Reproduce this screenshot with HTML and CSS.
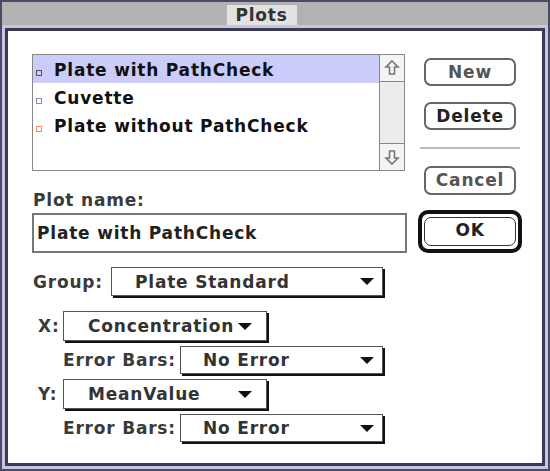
FILE: index.html
```html
<!DOCTYPE html>
<html lang="en">
<head>
    <meta charset="UTF-8">
    <title>Plots</title>
    <link rel="stylesheet" href="styles.css">
</head>
<body>
    <div class="window">
        <div class="titlebar">
            <div class="title">Plots</div>
        </div>

        <div class="frame">
            <div class="top">
                <div class="left">
                    <div class="listbox">
                        <ul class="items">
                            <li class="selected"><span class="mark mark-gray"></span>Plate with PathCheck</li>
                            <li><span class="mark mark-blue"></span>Cuvette</li>
                            <li><span class="mark mark-orange"></span>Plate without PathCheck</li>
                        </ul>
                        <div class="scrollbar">
                            <div class="arrow">
                                <svg width="16" height="18" viewBox="0 0 16 18">
                                    <polygon points="8,2 14,8 10.5,8 10.5,15 5.5,15 5.5,8 2,8" fill="#f4f4f4" stroke="#777" stroke-width="1.6"/>
                                </svg>
                            </div>
                            <div class="track"></div>
                            <div class="arrow arrow-down">
                                <svg width="16" height="18" viewBox="0 0 16 18">
                                    <polygon points="8,16 14,10 10.5,10 10.5,3 5.5,3 5.5,10 2,10" fill="#f4f4f4" stroke="#777" stroke-width="1.6"/>
                                </svg>
                            </div>
                        </div>
                    </div>

                    <div class="label name-label">Plot name:</div>
                    <div class="field">Plate with PathCheck</div>
                </div>

                <div class="right">
                    <div class="btn btn-new">New</div>
                    <div class="btn btn-delete">Delete</div>
                    <div class="sep"></div>
                    <div class="btn btn-cancel">Cancel</div>
                    <div class="ok-ring">
                        <div class="btn btn-ok">OK</div>
                    </div>
                </div>
            </div>

            <div class="row row-group">
                <span class="label group-label">Group:</span>
                <div class="popup popup-group"><span>Plate Standard</span><i class="tri"></i></div>
            </div>

            <div class="row row-axis">
                <span class="label axis-label">X:</span>
                <div class="popup popup-axis"><span>Concentration</span><i class="tri"></i></div>
            </div>
            <div class="row row-err">
                <span class="label err-label">Error Bars:</span>
                <div class="popup popup-err"><span>No Error</span><i class="tri"></i></div>
            </div>

            <div class="row row-axis">
                <span class="label axis-label">Y:</span>
                <div class="popup popup-axis"><span>MeanValue</span><i class="tri"></i></div>
            </div>
            <div class="row row-err">
                <span class="label err-label">Error Bars:</span>
                <div class="popup popup-err"><span>No Error</span><i class="tri"></i></div>
            </div>
        </div>
    </div>
</body>
</html>
```

FILE: styles.css
```css
body {
    margin: 0;
    padding: 0;
    background-color: #4a4a66;
    font-family: 'DejaVu Sans', sans-serif;
    font-weight: bold;
    font-size: 17px;
    letter-spacing: 0.8px;
    color: #222;
}

.window {
    width: 550px;
    height: 471px;
    box-sizing: border-box;
    border: 2px solid #4a4a66;
    background-color: #c6c6e0;
    display: flex;
    flex-direction: column;
}

.titlebar {
    height: 23px;
    background-color: #b2b2b2;
    display: flex;
    justify-content: center;
    align-items: flex-end;
}

.title {
    height: 20px;
    line-height: 20px;
    padding: 0 9px 0 8px;
    margin-right: 26px;
    background-color: #e2e2e2;
    color: #333;
}

.frame {
    flex: 1;
    margin: 3px;
    border: 3px solid #3a3a56;
    background-color: #fff;
    padding: 23px 0 0 24px;
}

.top {
    display: flex;
    gap: 11px;
}

.left {
    width: 375px;
}

/* list */
.listbox {
    width: 373px;
    height: 117px;
    box-sizing: border-box;
    border: 1px solid #888;
    display: flex;
}

.items {
    list-style: none;
    margin: 0;
    padding: 0;
    flex: 1;
}

.items li {
    height: 28px;
    line-height: 30px;
    padding-left: 3px;
    color: #111;
    white-space: nowrap;
}

.items li.selected {
    background-color: #ccccfa;
}

.mark {
    display: inline-block;
    width: 4px;
    height: 4px;
    border: 1.5px solid #555;
    margin-right: 12px;
    vertical-align: 0;
}

.mark-blue {
    border-color: #8c8cb8;
}

.mark-orange {
    border-color: #ff8a48;
}

.scrollbar {
    width: 24px;
    border-left: 1px solid #888;
    background-color: #ececec;
    display: flex;
    flex-direction: column;
}

.arrow {
    height: 26px;
    border-bottom: 1px solid #888;
    background-color: #f4f4f4;
    display: flex;
    align-items: center;
    justify-content: center;
}

.arrow-down {
    border-bottom: none;
    border-top: 1px solid #888;
}

.track {
    flex: 1;
}

.label {
    color: #3a3a3a;
}

.name-label {
    height: 20px;
    line-height: 20px;
    margin-top: 19px;
    padding-left: 1px;
}

.field {
    margin-top: 3px;
    height: 40px;
    box-sizing: border-box;
    border: 2px solid #777;
    line-height: 36px;
    padding-left: 3px;
    color: #222;
}

/* buttons */
.right {
    width: 104px;
    display: flex;
    flex-direction: column;
    align-items: center;
}

.btn {
    width: 92px;
    height: 28px;
    box-sizing: border-box;
    border: 2px solid #666;
    border-radius: 7px;
    text-align: center;
    line-height: 24px;
    color: #222;
}

.btn-new {
    margin-top: 4px;
    color: #555;
}

.btn-delete {
    margin-top: 16px;
}

.sep {
    width: 100px;
    height: 2px;
    background-color: #bbb;
    margin-top: 17px;
}

.btn-cancel {
    margin-top: 17px;
    height: 29px;
    color: #555;
}

.ok-ring {
    margin-top: 15px;
    width: 104px;
    height: 43px;
    box-sizing: border-box;
    border: 4px solid #111;
    border-radius: 10px;
    display: flex;
    align-items: center;
    justify-content: center;
}

.btn-ok {
    height: 29px;
    border-color: #333;
    border-width: 1.5px;
}

/* popup rows */
.row {
    display: flex;
    align-items: center;
}

.row-group {
    margin-top: 14px;
}

.group-label {
    width: 78px;
    padding-left: 1px;
}

.row-axis {
    margin-top: 15px;
    padding-left: 6px;
}

.row-axis + .row-err + .row-axis {
    margin-top: 5px;
}

.axis-label {
    width: 25px;
}

.row-err {
    margin-top: 5px;
    padding-left: 31px;
}

.err-label {
    width: 117px;
}

.popup {
    position: relative;
    box-sizing: border-box;
    border: 1px solid #555;
    box-shadow: 2px 2px 0 #111;
    display: flex;
    align-items: center;
    justify-content: space-between;
    color: #333;
}

.popup-group {
    width: 272px;
    height: 29px;
    padding: 0 8px 0 23px;
}

.popup-axis {
    width: 204px;
    height: 30px;
    padding: 0 14px 0 24px;
}

.popup-err {
    width: 203px;
    height: 28px;
    padding: 0 8px 0 22px;
}

.tri {
    width: 0;
    height: 0;
    border-left: 7px solid transparent;
    border-right: 7px solid transparent;
    border-top: 7px solid #111;
}
```
